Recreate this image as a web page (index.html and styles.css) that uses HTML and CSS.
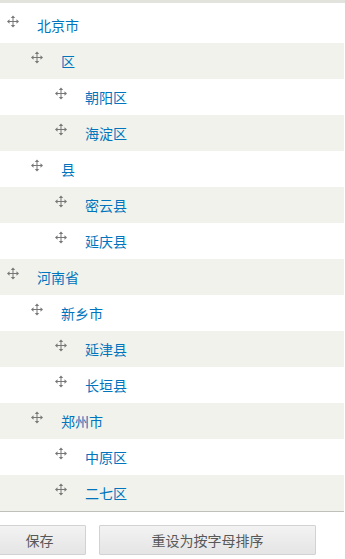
FILE: index.html
```html
<!DOCTYPE html>
<html lang="zh">
<head>
<meta charset="utf-8">
<link rel="stylesheet" href="styles.css">
</head>
<body>
<div class="head-edge"></div>
<div class="tree">
  <div class="row odd first lvl0"><span class="handle"><svg width="12" height="13" viewBox="0 0 12 13"><path d="M6 2v9M1.5 6.5h9" stroke="#777" stroke-width="1"/><path d="M6 0.5L3.8 3h4.4zM6 12.5L3.8 10h4.4zM0 6.5L2.5 4.3v4.4zM12 6.5L9.5 4.3v4.4z" fill="#777"/></svg></span><a class="label">北京市</a></div>
  <div class="row even lvl1"><span class="handle"><svg width="12" height="13" viewBox="0 0 12 13"><path d="M6 2v9M1.5 6.5h9" stroke="#777" stroke-width="1"/><path d="M6 0.5L3.8 3h4.4zM6 12.5L3.8 10h4.4zM0 6.5L2.5 4.3v4.4zM12 6.5L9.5 4.3v4.4z" fill="#777"/></svg></span><a class="label">区</a></div>
  <div class="row odd lvl2"><span class="handle"><svg width="12" height="13" viewBox="0 0 12 13"><path d="M6 2v9M1.5 6.5h9" stroke="#777" stroke-width="1"/><path d="M6 0.5L3.8 3h4.4zM6 12.5L3.8 10h4.4zM0 6.5L2.5 4.3v4.4zM12 6.5L9.5 4.3v4.4z" fill="#777"/></svg></span><a class="label">朝阳区</a></div>
  <div class="row even lvl2"><span class="handle"><svg width="12" height="13" viewBox="0 0 12 13"><path d="M6 2v9M1.5 6.5h9" stroke="#777" stroke-width="1"/><path d="M6 0.5L3.8 3h4.4zM6 12.5L3.8 10h4.4zM0 6.5L2.5 4.3v4.4zM12 6.5L9.5 4.3v4.4z" fill="#777"/></svg></span><a class="label">海淀区</a></div>
  <div class="row odd lvl1"><span class="handle"><svg width="12" height="13" viewBox="0 0 12 13"><path d="M6 2v9M1.5 6.5h9" stroke="#777" stroke-width="1"/><path d="M6 0.5L3.8 3h4.4zM6 12.5L3.8 10h4.4zM0 6.5L2.5 4.3v4.4zM12 6.5L9.5 4.3v4.4z" fill="#777"/></svg></span><a class="label">县</a></div>
  <div class="row even lvl2"><span class="handle"><svg width="12" height="13" viewBox="0 0 12 13"><path d="M6 2v9M1.5 6.5h9" stroke="#777" stroke-width="1"/><path d="M6 0.5L3.8 3h4.4zM6 12.5L3.8 10h4.4zM0 6.5L2.5 4.3v4.4zM12 6.5L9.5 4.3v4.4z" fill="#777"/></svg></span><a class="label">密云县</a></div>
  <div class="row odd lvl2"><span class="handle"><svg width="12" height="13" viewBox="0 0 12 13"><path d="M6 2v9M1.5 6.5h9" stroke="#777" stroke-width="1"/><path d="M6 0.5L3.8 3h4.4zM6 12.5L3.8 10h4.4zM0 6.5L2.5 4.3v4.4zM12 6.5L9.5 4.3v4.4z" fill="#777"/></svg></span><a class="label">延庆县</a></div>
  <div class="row even lvl0"><span class="handle"><svg width="12" height="13" viewBox="0 0 12 13"><path d="M6 2v9M1.5 6.5h9" stroke="#777" stroke-width="1"/><path d="M6 0.5L3.8 3h4.4zM6 12.5L3.8 10h4.4zM0 6.5L2.5 4.3v4.4zM12 6.5L9.5 4.3v4.4z" fill="#777"/></svg></span><a class="label">河南省</a></div>
  <div class="row odd lvl1"><span class="handle"><svg width="12" height="13" viewBox="0 0 12 13"><path d="M6 2v9M1.5 6.5h9" stroke="#777" stroke-width="1"/><path d="M6 0.5L3.8 3h4.4zM6 12.5L3.8 10h4.4zM0 6.5L2.5 4.3v4.4zM12 6.5L9.5 4.3v4.4z" fill="#777"/></svg></span><a class="label">新乡市</a></div>
  <div class="row even lvl2"><span class="handle"><svg width="12" height="13" viewBox="0 0 12 13"><path d="M6 2v9M1.5 6.5h9" stroke="#777" stroke-width="1"/><path d="M6 0.5L3.8 3h4.4zM6 12.5L3.8 10h4.4zM0 6.5L2.5 4.3v4.4zM12 6.5L9.5 4.3v4.4z" fill="#777"/></svg></span><a class="label">延津县</a></div>
  <div class="row odd lvl2"><span class="handle"><svg width="12" height="13" viewBox="0 0 12 13"><path d="M6 2v9M1.5 6.5h9" stroke="#777" stroke-width="1"/><path d="M6 0.5L3.8 3h4.4zM6 12.5L3.8 10h4.4zM0 6.5L2.5 4.3v4.4zM12 6.5L9.5 4.3v4.4z" fill="#777"/></svg></span><a class="label">长垣县</a></div>
  <div class="row even lvl1"><span class="handle"><svg width="12" height="13" viewBox="0 0 12 13"><path d="M6 2v9M1.5 6.5h9" stroke="#777" stroke-width="1"/><path d="M6 0.5L3.8 3h4.4zM6 12.5L3.8 10h4.4zM0 6.5L2.5 4.3v4.4zM12 6.5L9.5 4.3v4.4z" fill="#777"/></svg></span><a class="label">郑州市</a></div>
  <div class="row odd lvl2"><span class="handle"><svg width="12" height="13" viewBox="0 0 12 13"><path d="M6 2v9M1.5 6.5h9" stroke="#777" stroke-width="1"/><path d="M6 0.5L3.8 3h4.4zM6 12.5L3.8 10h4.4zM0 6.5L2.5 4.3v4.4zM12 6.5L9.5 4.3v4.4z" fill="#777"/></svg></span><a class="label">中原区</a></div>
  <div class="row even lvl2"><span class="handle"><svg width="12" height="13" viewBox="0 0 12 13"><path d="M6 2v9M1.5 6.5h9" stroke="#777" stroke-width="1"/><path d="M6 0.5L3.8 3h4.4zM6 12.5L3.8 10h4.4zM0 6.5L2.5 4.3v4.4zM12 6.5L9.5 4.3v4.4z" fill="#777"/></svg></span><a class="label">二七区</a></div>
</div>
<div class="actions">
  <button class="btn btn-save">保存</button>
  <button class="btn btn-reset">重设为按字母排序</button>
</div>
</body>
</html>
```

FILE: styles.css
```css
html, body {
  margin: 0;
  padding: 0;
  background: #ffffff;
  font-family: "Noto Sans CJK SC", "Liberation Sans", sans-serif;
  font-size: 14px;
  overflow: hidden;
}

.head-edge {
  height: 3px;
  background: #e2e3dd;
}

.tree {
  width: 344px;
  border-bottom: 1px solid #bfc0ba;
}

.row {
  display: flex;
  align-items: center;
  height: 36px;
  box-sizing: border-box;
}

.row.first {
  height: 40px;
  padding-top: 3px;
}

.row.odd { background: #ffffff; }
.row.even { background: #f2f2ec; }

.lvl0 { padding-left: 7px; }
.lvl1 { padding-left: 31px; }
.lvl2 { padding-left: 55px; }

.handle {
  display: flex;
  width: 12px;
  height: 13px;
  margin-right: 18px;
  margin-bottom: 7px;
}

.label {
  color: #0074bd;
  font-size: 14px;
  line-height: 18px;
  text-decoration: none;
}

.actions {
  display: flex;
  gap: 13px;
  margin-top: 13px;
  margin-left: -7px;
}

.btn {
  height: 30px;
  box-sizing: border-box;
  border: 1px solid #d2d2d2;
  border-radius: 1px;
  background: linear-gradient(#f3f3f3, #e5e5e5);
  color: #585858;
  font-family: "Noto Sans CJK SC", "Liberation Sans", sans-serif;
  font-size: 14px;
  padding: 0;
}

.btn-save { width: 93px; }
.btn-reset { width: 217px; }
```
